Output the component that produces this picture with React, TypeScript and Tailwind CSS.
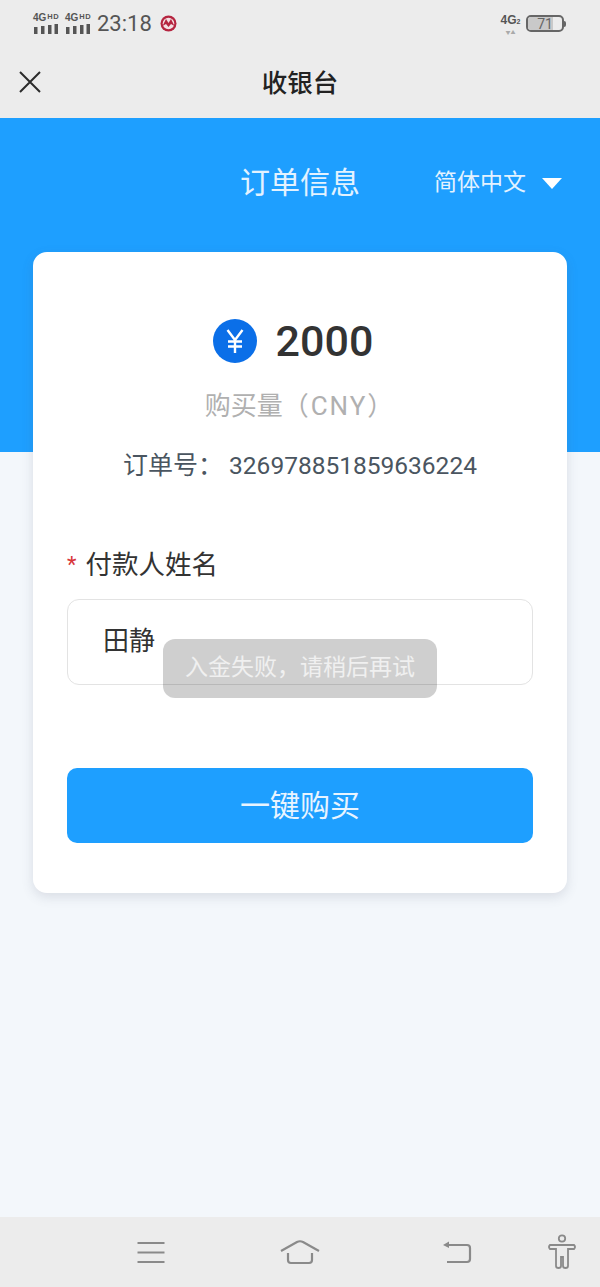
const CJK = "font-['Roboto','Noto_Sans_CJK_SC',sans-serif]";

const SignalBars = () => (
    <svg width="25" height="10" viewBox="0 0 25 10" className="block">
        <rect x="1" y="3" width="3.5" height="7" fill="#555" />
        <rect x="8" y="2" width="3.5" height="8" fill="#555" />
        <rect x="15" y="1" width="3.5" height="9" fill="#555" />
        <rect x="21.5" y="0" width="3.5" height="10" fill="#555" />
    </svg>
);

const Signal = () => (
    <div className="flex w-[25px] flex-col items-start gap-[2px]">
        <span className="font-['Liberation_Sans',sans-serif] text-[10px] leading-[8px] font-bold whitespace-nowrap text-[#555]">
            4G<span className="ml-[1px] align-top text-[7.5px] leading-[6px] tracking-[0.5px]">HD</span>
        </span>
        <SignalBars />
    </div>
);

const BankLogo = () => (
    <svg width="17" height="17" viewBox="0 0 17 17">
        <circle cx="8.5" cy="8.5" r="8" fill="#b5243f" />
        <circle cx="8.5" cy="8.5" r="5.8" fill="#f3dfe2" />
        <path d="M2.5 11 L6 4 L8.5 8 L11 4 L14.5 11 L11 9 L8.5 12 L6 9 Z" fill="#b5243f" />
    </svg>
);

const Battery = () => (
    <div className="flex items-center">
        <div className="flex h-[17px] w-[38px] items-center overflow-hidden rounded-[5px] border-2 border-[#666] bg-[#ececec]">
            <div className="flex h-full w-[25px] items-center justify-end bg-[#c9c9c9]">
                <span className="font-['Roboto',sans-serif] text-[14px] leading-none text-[#666]">71</span>
            </div>
        </div>
        <div className="h-[6px] w-[2px] rounded-r-sm bg-[#666]" />
    </div>
);

const CloseIcon = () => (
    <svg width="24" height="24" viewBox="0 0 24 24" fill="none" stroke="#2b2b2b" strokeWidth="2">
        <path d="M2 2 L22 22 M22 2 L2 22" />
    </svg>
);

const YenIcon = () => (
    <svg width="18" height="24" viewBox="0 0 18 24" fill="none" stroke="#fff" strokeWidth="2.4">
        <path d="M1.5 1 L9 11 L16.5 1 M2 12.5 H16 M2 17.5 H16 M9 11 V24" />
    </svg>
);

const MenuIcon = () => (
    <svg width="28" height="24" viewBox="0 0 28 24" fill="none" stroke="#8a8a8a" strokeWidth="2.2">
        <path d="M0.5 3 H27.5 M0.5 12.5 H27.5 M0.5 22 H27.5" />
    </svg>
);

const HomeIcon = () => (
    <svg width="40" height="26" viewBox="0 0 40 26" fill="none" stroke="#8a8a8a" strokeWidth="2.2">
        <path d="M1 12 L17 3 Q20 1.5 23 3 L39 12" />
        <path d="M8 14 V21 Q8 24 11 24 H29 Q32 24 32 21 V14" />
    </svg>
);

const BackIcon = () => (
    <svg width="30" height="24" viewBox="0 0 30 24" fill="none" stroke="#8a8a8a" strokeWidth="2.2">
        <path d="M4 5 H25 Q28 5 28 8 V19 Q28 22 25 22 H5" />
        <path d="M1 5 L7 1.5 V8 Z" fill="#8a8a8a" stroke="none" />
    </svg>
);

const PersonIcon = () => (
    <svg width="30" height="36" viewBox="0 0 30 36" fill="none" stroke="#8a8a8a" strokeWidth="1.8">
        <circle cx="15" cy="4.5" r="3.2" />
        <path d="M3 11 H27 Q29 13 27 15 H21 V32 Q21 34 18.5 34 Q16 34 16 32 V23 H14 V32 Q14 34 11.5 34 Q9 34 9 32 V15 H3 Q1 13 3 11 Z" />
    </svg>
);

const App: React.FC = () => {
    return (
        <div className={`relative flex h-[1287px] w-[600px] flex-col overflow-hidden bg-[#f3f7fb] ${CJK}`}>
            {/* status bar */}
            <div className="flex h-[50px] items-center bg-[#ececec] pr-[34px] pb-[3px] pl-[33px]">
                <div className="flex items-center gap-[7px]">
                    <Signal />
                    <Signal />
                </div>
                <span className="ml-[7px] text-[22px] leading-none text-[#555]">23:18</span>
                <div className="ml-[8px]">
                    <BankLogo />
                </div>
                <div className="ml-auto flex items-center gap-[6px]">
                    <div className="ml-[3px] flex w-[19px] flex-col items-center">
                        <span className="font-['Liberation_Sans',sans-serif] text-[12px] leading-[14px] font-bold whitespace-nowrap text-[#555]">
                            4G<span className="text-[7px]">2</span>
                        </span>
                        <span className="text-[5px] leading-[6px] text-[#aaa]">▼▲</span>
                    </div>
                    <Battery />
                </div>
            </div>

            {/* nav */}
            <div className="relative flex h-[68px] items-center justify-center bg-[#ececec]">
                <div className="absolute top-[20px] left-[18px]">
                    <CloseIcon />
                </div>
                <span className="text-[25.5px] leading-none font-medium text-[#222]">收银台</span>
            </div>

            {/* blue header */}
            <div className="relative flex h-[334px] shrink-0 justify-center bg-[#1e9fff] pt-[45px]">
                <span className="text-[30px] leading-[40px] text-[#e3f2ff]">订单信息</span>
                <div className="absolute top-[50px] right-[38px] flex items-center gap-[16px]">
                    <span className="text-[23px] leading-[30px] text-[#e3f2ff]">简体中文</span>
                    <div className="h-0 w-0 border-x-[10px] border-t-[11px] border-x-transparent border-t-white" />
                </div>
            </div>

            {/* card */}
            <div className="z-10 mx-[33px] -mt-[200px] flex h-[641px] flex-col rounded-[14px] bg-white px-[34px] shadow-[0_4px_12px_rgba(80,90,110,0.16)]">
                <div className="mt-[66px] flex items-center justify-center gap-[19px] pr-[14px]">
                    <div className="flex h-[44px] w-[44px] items-center justify-center rounded-full bg-[#0b6fe8]">
                        <YenIcon />
                    </div>
                    <span className="text-[43px] leading-[46px] font-medium text-[#333]">2000</span>
                </div>
                <div className="mt-[24px] text-center text-[26px] leading-[36px] text-[#b0b0b0]">
                    购买量<span className="tracking-[2px]">（CNY）</span>
                </div>
                <div className="mt-[25px] flex justify-center text-[25px] leading-[34px] text-[#4a5560]">
                    <span className="mr-[6px]">订单号：</span>
                    <span className="text-[24.5px]">326978851859636224</span>
                </div>

                <div className="mt-[65px] flex items-center text-[26.5px] leading-[34px] text-[#333]">
                    <span className="mr-[9px] text-[22px] text-[#d8363a]">*</span>
                    付款人姓名
                </div>
                <div className="mt-[17px] flex h-[86px] items-center rounded-[12px] border border-[#e3e3e3] pb-[2px] pl-[35px] text-[26px] text-[#333]">
                    田静
                </div>
                <div className="mt-[83px] flex h-[75px] items-center justify-center rounded-[10px] bg-[#1e9fff] text-[30px] text-[#e8f4ff]">
                    一键购买
                </div>
            </div>

            {/* toast */}
            <div className="absolute top-[639px] left-[163px] z-20 flex h-[59px] w-[274px] items-center justify-center rounded-[12px] bg-[rgba(0,0,0,0.19)] text-[23px] text-[#f0f0f0]">
                入金失败，请稍后再试
            </div>

            {/* bottom nav */}
            <div className="absolute right-0 bottom-0 left-0 z-10 flex h-[70px] items-center bg-[#ececec]">
                <div className="ml-[137px]">
                    <MenuIcon />
                </div>
                <div className="ml-[115px]">
                    <HomeIcon />
                </div>
                <div className="ml-[122px]">
                    <BackIcon />
                </div>
                <div className="ml-[75px]">
                    <PersonIcon />
                </div>
            </div>
        </div>
    );
};

export default App;
